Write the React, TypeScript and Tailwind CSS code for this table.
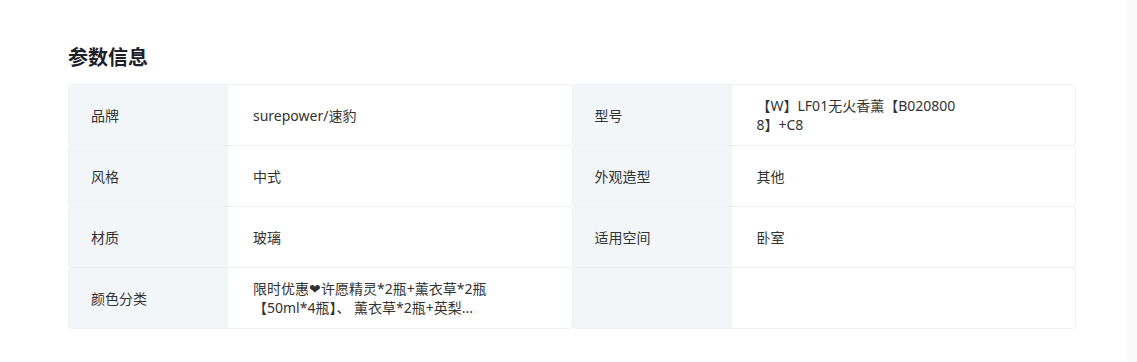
import React from "react";

type Item = { label: string; value: string; w: string };

const items: Item[] = [
  { label: "品牌", value: "surepower/速豹", w: "max-w-[246px]" },
  { label: "型号", value: "【W】LF01无火香薰【B0208008】+C8", w: "max-w-[208px]" },
  { label: "风格", value: "中式", w: "max-w-[246px]" },
  { label: "外观造型", value: "其他", w: "max-w-[208px]" },
  { label: "材质", value: "玻璃", w: "max-w-[246px]" },
  { label: "适用空间", value: "卧室", w: "max-w-[208px]" },
  {
    label: "颜色分类",
    value: "限时优惠❤许愿精灵*2瓶+薰衣草*2瓶【50ml*4瓶】、 薰衣草*2瓶+英梨...",
    w: "max-w-[246px]",
  },
  { label: "", value: "", w: "max-w-[208px]" },
];

export default function App() {
  return (
    <div
      className="flex w-full h-[362px] bg-white text-[#333333]"
      style={{ fontFamily: '"Noto Sans", "Noto Sans CJK SC", sans-serif' }}
    >
      <div className="flex-1 pl-[68px] pt-[44px] pr-[50px]">
        <h2 className="text-[20px] leading-[28px] font-bold text-[#1d2129]">参数信息</h2>
        <div className="mt-[12px] w-[1008px] grid grid-cols-2 pl-px pt-px">
          {items.map((it, i) => (
            <div
              key={i}
              className="-ml-px -mt-px h-[62px] flex rounded-[4px] border border-[#edf0f3] overflow-hidden"
            >
              <div className="w-[159px] shrink-0 bg-[#f3f6f9] flex items-center pl-[22px] text-[14px]">
                {it.label}
              </div>
              <div className="flex-1 flex items-center pl-[25px] text-[14px]">
                <div className={`${it.w} leading-[19px] break-all`}>{it.value}</div>
              </div>
            </div>
          ))}
        </div>
      </div>
      <div className="w-[12px] bg-[#fafafa]" />
    </div>
  );
}
